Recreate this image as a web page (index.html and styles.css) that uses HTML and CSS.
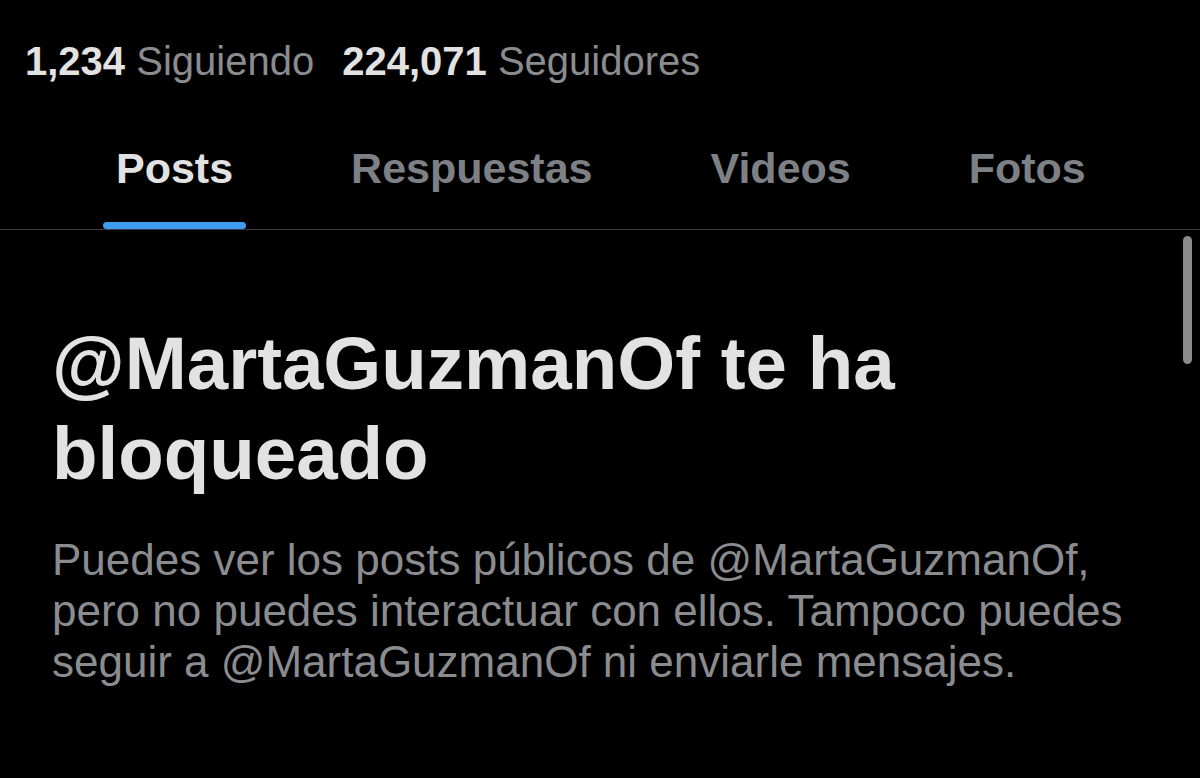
FILE: index.html
```html
<!DOCTYPE html>
<html lang="es">
<head>
<meta charset="utf-8">
<link rel="stylesheet" href="styles.css">
</head>
<body>
<div class="page">
  <div class="stats">
    <span class="stat"><b>1,234</b> <span class="label">Siguiendo</span></span>
    <span class="stat"><b>224,071</b> <span class="label">Seguidores</span></span>
  </div>
  <nav class="tabs">
    <div class="tab active"><span class="tab-text">Posts</span><span class="bar"></span></div>
    <div class="tab"><span class="tab-text">Respuestas</span></div>
    <div class="tab"><span class="tab-text">Videos</span></div>
    <div class="tab"><span class="tab-text">Fotos</span></div>
  </nav>
  <main class="content">
    <h1 class="title">@MartaGuzmanOf te ha bloqueado</h1>
    <p class="desc">Puedes ver los posts públicos de @MartaGuzmanOf, pero no puedes interactuar con ellos. Tampoco puedes seguir a @MartaGuzmanOf ni enviarle mensajes.</p>
    <div class="scrollbar"></div>
  </main>
</div>
</body>
</html>
```
FILE: styles.css
```css
html, body {
  margin: 0;
  padding: 0;
  background: #000;
}
body {
  font-family: "Liberation Sans", Arial, sans-serif;
  color: #e2e2e2;
  width: 1200px;
  height: 778px;
  overflow: hidden;
}
.page {
  display: flex;
  flex-direction: column;
}
.stats {
  display: flex;
  gap: 28px;
  padding: 36px 0 0 25px;
  height: 50px;
  font-size: 40px;
  line-height: 50px;
}
.stat b {
  font-weight: 700;
  color: #e2e2e2;
}
.label {
  color: #8a8c8f;
}
.tabs {
  display: flex;
  padding-left: 57px;
  margin-top: 44px;
  border-bottom: 1.5px solid #3a3d40;
  height: 99px;
}
.tab {
  position: relative;
  padding: 0 59px;
  display: flex;
  align-items: flex-start;
}
.tab-text {
  font-size: 43px;
  font-weight: 700;
  color: #7d8084;
  line-height: 60px;
  padding-top: 8px;
}
.tab.active .tab-text {
  color: #e2e2e2;
}
.bar {
  position: absolute;
  left: 46px;
  right: 46px;
  bottom: 0;
  height: 7px;
  border-radius: 4px;
  background: #3d9bf0;
}
.content {
  position: relative;
  padding: 89px 0 0 52px;
}
.title {
  margin: 0;
  font-size: 74.5px;
  line-height: 90px;
  font-weight: 700;
  color: #e2e2e2;
  width: 1100px;
}
.desc {
  margin: 35px 0 0;
  font-size: 44px;
  line-height: 51px;
  color: #8a8c8f;
  width: 1110px;
}
.scrollbar {
  position: absolute;
  right: 8px;
  top: 6px;
  width: 9px;
  height: 128px;
  border-radius: 5px;
  background: #8a8a8a;
}
```
